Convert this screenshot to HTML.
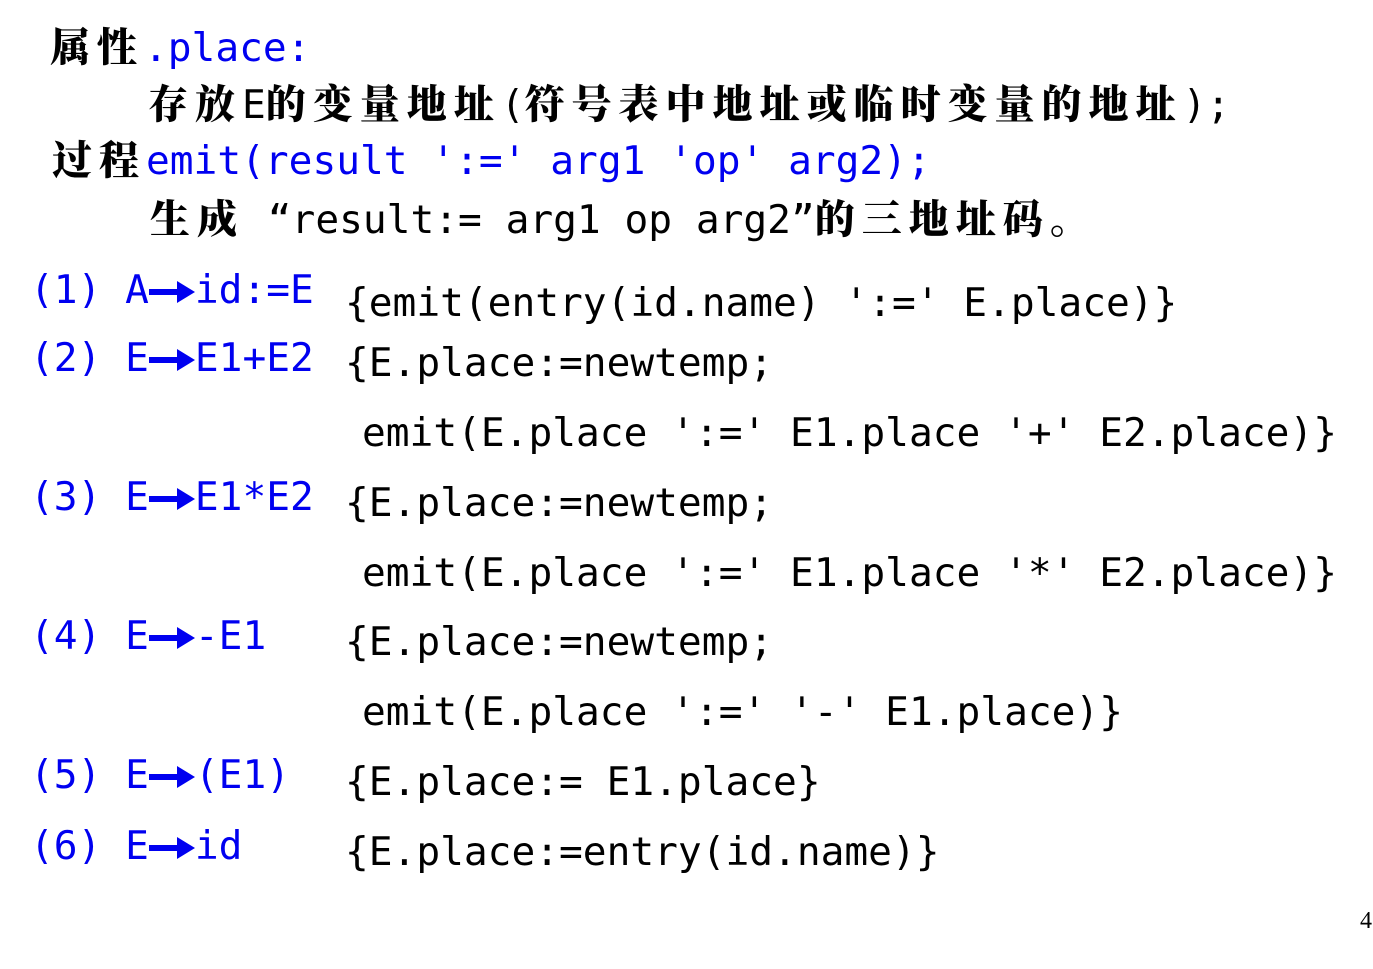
<!DOCTYPE html>
<html><head><meta charset="utf-8"><style>
body{margin:0;width:1373px;height:969px;background:#fff;position:relative;overflow:hidden}
.l{position:absolute;white-space:pre;font-family:"DejaVu Sans Mono","Liberation Mono","Noto Sans CJK SC",monospace;font-size:39.5px;line-height:40px;color:#000}
.b{color:#0000f0}
.c{font-family:"Noto Serif CJK SC","Noto Sans CJK SC",serif;font-weight:900;font-size:40px;letter-spacing:7px;color:#000}
.a{display:inline-block;width:46px;height:26px;vertical-align:-2px}
.pn{position:absolute;left:1360px;top:908px;font-family:"Liberation Serif",serif;font-size:24px}
</style></head><body>
<div class="l" style="left:50px;top:25px"><span class="c">属性</span><span class="b">.place:</span></div>
<div class="l" style="left:148px;top:82px"><span class="c">存放</span>E<span class="c">的变量地址</span>(<span class="c">符号表中地址或临时变量的地址</span>);</div>
<div class="l" style="left:52px;top:138px"><span class="c">过程</span><span class="b">emit(result ':=' arg1 'op' arg2);</span></div>
<div class="l" style="left:150px;top:197px"><span class="c">生成</span> “result:= arg1 op arg2”<span class="c">的三地址码。</span></div>

<div class="l b" style="left:30px;top:270px">(1) A<svg class="a" viewBox="0 0 46 26"><path d="M0 10h28V2l18 11-18 11v-8H0z" fill="#0000f0"/></svg>id:=E</div>
<div class="l b" style="left:30px;top:338px">(2) E<svg class="a" viewBox="0 0 46 26"><path d="M0 10h28V2l18 11-18 11v-8H0z" fill="#0000f0"/></svg>E1+E2</div>
<div class="l b" style="left:30px;top:477px">(3) E<svg class="a" viewBox="0 0 46 26"><path d="M0 10h28V2l18 11-18 11v-8H0z" fill="#0000f0"/></svg>E1*E2</div>
<div class="l b" style="left:30px;top:616px">(4) E<svg class="a" viewBox="0 0 46 26"><path d="M0 10h28V2l18 11-18 11v-8H0z" fill="#0000f0"/></svg>-E1</div>
<div class="l b" style="left:30px;top:755px">(5) E<svg class="a" viewBox="0 0 46 26"><path d="M0 10h28V2l18 11-18 11v-8H0z" fill="#0000f0"/></svg>(E1)</div>
<div class="l b" style="left:30px;top:826px">(6) E<svg class="a" viewBox="0 0 46 26"><path d="M0 10h28V2l18 11-18 11v-8H0z" fill="#0000f0"/></svg>id</div>

<div class="l" style="left:345px;top:283px">{emit(entry(id.name) ':=' E.place)}</div>
<div class="l" style="left:345px;top:343px">{E.place:=newtemp;</div>
<div class="l" style="left:362px;top:413px">emit(E.place ':=' E1.place '+' E2.place)}</div>
<div class="l" style="left:345px;top:483px">{E.place:=newtemp;</div>
<div class="l" style="left:362px;top:553px">emit(E.place ':=' E1.place '*' E2.place)}</div>
<div class="l" style="left:345px;top:622px">{E.place:=newtemp;</div>
<div class="l" style="left:362px;top:692px">emit(E.place ':=' '-' E1.place)}</div>
<div class="l" style="left:345px;top:762px">{E.place:= E1.place}</div>
<div class="l" style="left:345px;top:832px">{E.place:=entry(id.name)}</div>
<div class="pn">4</div>
</body></html>
